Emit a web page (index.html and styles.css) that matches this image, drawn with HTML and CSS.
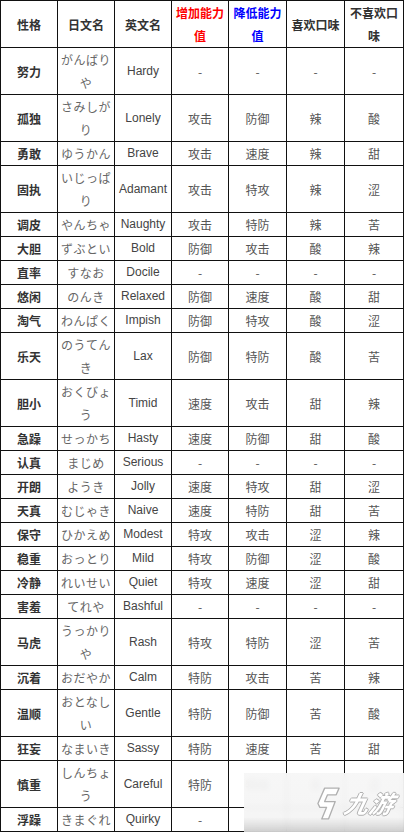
FILE: index.html
```html
<!DOCTYPE html>
<html lang="zh">
<head>
<meta charset="utf-8">
<link rel="stylesheet" href="styles.css">
</head>
<body>
<div class="page">
<table class="nature">
<colgroup>
<col class="c1"><col class="c2"><col class="c3"><col class="c4"><col class="c5"><col class="c6"><col class="c7">
</colgroup>
<thead>
<tr><th>性格</th><th>日文名</th><th>英文名</th><th class="up">增加能力值</th><th class="down">降低能力值</th><th>喜欢口味</th><th>不喜欢口味</th></tr>
</thead>
<tbody>
<tr><th>努力</th><td class="jp">がんばりや</td><td class="en">Hardy</td><td>-</td><td>-</td><td>-</td><td>-</td></tr>
<tr><th>孤独</th><td class="jp">さみしがり</td><td class="en">Lonely</td><td>攻击</td><td>防御</td><td>辣</td><td>酸</td></tr>
<tr><th>勇敢</th><td class="jp">ゆうかん</td><td class="en">Brave</td><td>攻击</td><td>速度</td><td>辣</td><td>甜</td></tr>
<tr><th>固执</th><td class="jp">いじっぱり</td><td class="en">Adamant</td><td>攻击</td><td>特攻</td><td>辣</td><td>涩</td></tr>
<tr><th>调皮</th><td class="jp">やんちゃ</td><td class="en">Naughty</td><td>攻击</td><td>特防</td><td>辣</td><td>苦</td></tr>
<tr><th>大胆</th><td class="jp">ずぶとい</td><td class="en">Bold</td><td>防御</td><td>攻击</td><td>酸</td><td>辣</td></tr>
<tr><th>直率</th><td class="jp">すなお</td><td class="en">Docile</td><td>-</td><td>-</td><td>-</td><td>-</td></tr>
<tr><th>悠闲</th><td class="jp">のんき</td><td class="en">Relaxed</td><td>防御</td><td>速度</td><td>酸</td><td>甜</td></tr>
<tr><th>淘气</th><td class="jp">わんぱく</td><td class="en">Impish</td><td>防御</td><td>特攻</td><td>酸</td><td>涩</td></tr>
<tr><th>乐天</th><td class="jp">のうてんき</td><td class="en">Lax</td><td>防御</td><td>特防</td><td>酸</td><td>苦</td></tr>
<tr><th>胆小</th><td class="jp">おくびょう</td><td class="en">Timid</td><td>速度</td><td>攻击</td><td>甜</td><td>辣</td></tr>
<tr><th>急躁</th><td class="jp">せっかち</td><td class="en">Hasty</td><td>速度</td><td>防御</td><td>甜</td><td>酸</td></tr>
<tr><th>认真</th><td class="jp">まじめ</td><td class="en">Serious</td><td>-</td><td>-</td><td>-</td><td>-</td></tr>
<tr><th>开朗</th><td class="jp">ようき</td><td class="en">Jolly</td><td>速度</td><td>特攻</td><td>甜</td><td>涩</td></tr>
<tr><th>天真</th><td class="jp">むじゃき</td><td class="en">Naive</td><td>速度</td><td>特防</td><td>甜</td><td>苦</td></tr>
<tr><th>保守</th><td class="jp">ひかえめ</td><td class="en">Modest</td><td>特攻</td><td>攻击</td><td>涩</td><td>辣</td></tr>
<tr><th>稳重</th><td class="jp">おっとり</td><td class="en">Mild</td><td>特攻</td><td>防御</td><td>涩</td><td>酸</td></tr>
<tr><th>冷静</th><td class="jp">れいせい</td><td class="en">Quiet</td><td>特攻</td><td>速度</td><td>涩</td><td>甜</td></tr>
<tr><th>害羞</th><td class="jp">てれや</td><td class="en">Bashful</td><td>-</td><td>-</td><td>-</td><td>-</td></tr>
<tr><th>马虎</th><td class="jp">うっかりや</td><td class="en">Rash</td><td>特攻</td><td>特防</td><td>涩</td><td>苦</td></tr>
<tr><th>沉着</th><td class="jp">おだやか</td><td class="en">Calm</td><td>特防</td><td>攻击</td><td>苦</td><td>辣</td></tr>
<tr><th>温顺</th><td class="jp">おとなしい</td><td class="en">Gentle</td><td>特防</td><td>防御</td><td>苦</td><td>酸</td></tr>
<tr><th>狂妄</th><td class="jp">なまいき</td><td class="en">Sassy</td><td>特防</td><td>速度</td><td>苦</td><td>甜</td></tr>
<tr><th>慎重</th><td class="jp">しんちょう</td><td class="en">Careful</td><td>特防</td><td>特攻</td><td>苦</td><td>涩</td></tr>
<tr><th>浮躁</th><td class="jp">きまぐれ</td><td class="en">Quirky</td><td>-</td><td>-</td><td>-</td><td>-</td></tr>
</tbody>
</table>
<div class="watermark">
<svg class="wm-logo" viewBox="0 0 26 36" width="25" height="35">
<path d="M9 2 L24 2 L21 9 L12 9 L9 16 L20 16 L13 34 L6 34 L11 22 L4 22 L2 18 Z" fill="#fff" stroke="#b0b0b0" stroke-width="1.4" stroke-linejoin="round"/>
</svg>
<span class="wm-text">九游</span>
</div>
</div>
</body>
</html>
```
FILE: styles.css
```css
html, body {
  margin: 0;
  padding: 0;
  background: #fff;
}
.page {
  position: relative;
  width: 404px;
  height: 832px;
  overflow: hidden;
}
.nature {
  border-collapse: collapse;
  table-layout: fixed;
  width: 404px;
  font-family: "Liberation Sans", "Noto Sans CJK SC", sans-serif;
  font-size: 12px;
  color: #444;
}
.c1, .c2, .c3, .c4 { width: 57px; }
.c5, .c6 { width: 58px; }
.c7 { width: 59px; }
.nature th, .nature td {
  border: 1px solid #111;
  padding: 0 3px;
  line-height: 23px;
  text-align: center;
  vertical-align: middle;
}
.nature th {
  font-weight: bold;
  color: #333;
  font-family: "Noto Sans CJK SC", sans-serif;
}
.nature td {
  font-family: "Noto Sans CJK SC", sans-serif;
  color: #555;
}
.nature th.up { color: #f00; }
.nature th.down { color: #00f; }
.nature td.jp {
  font-family: "Noto Sans CJK JP", sans-serif;
  color: #666;
  font-weight: normal;
  letter-spacing: 0.5px;
}
.nature td.en {
  font-family: "Liberation Sans", Arial, sans-serif;
  color: #444;
}
.watermark {
  position: absolute;
  left: 244px;
  top: 773px;
  width: 160px;
  height: 59px;
  background: linear-gradient(to bottom, rgba(246,246,246,0.92) 0%, rgba(244,244,244,0.92) 75%, rgba(205,205,205,0.95) 100%);
  backdrop-filter: blur(3px);
  display: flex;
  align-items: center;
  padding-left: 72px;
  box-sizing: border-box;
  gap: 4px;
}
.wm-logo {
  display: block;
  margin-top: 2px;
}
.wm-text {
  font-family: "Noto Sans CJK SC", sans-serif;
  font-size: 24px;
  font-weight: bold;
  font-style: italic;
  color: #fff;
  letter-spacing: 1px;
  transform: skewX(-12deg);
  text-shadow: 1px 0 0 #b0b0b0, -1px 0 0 #b0b0b0, 0 1px 0 #b0b0b0, 0 -1px 0 #b0b0b0;
  line-height: 1;
}
```
